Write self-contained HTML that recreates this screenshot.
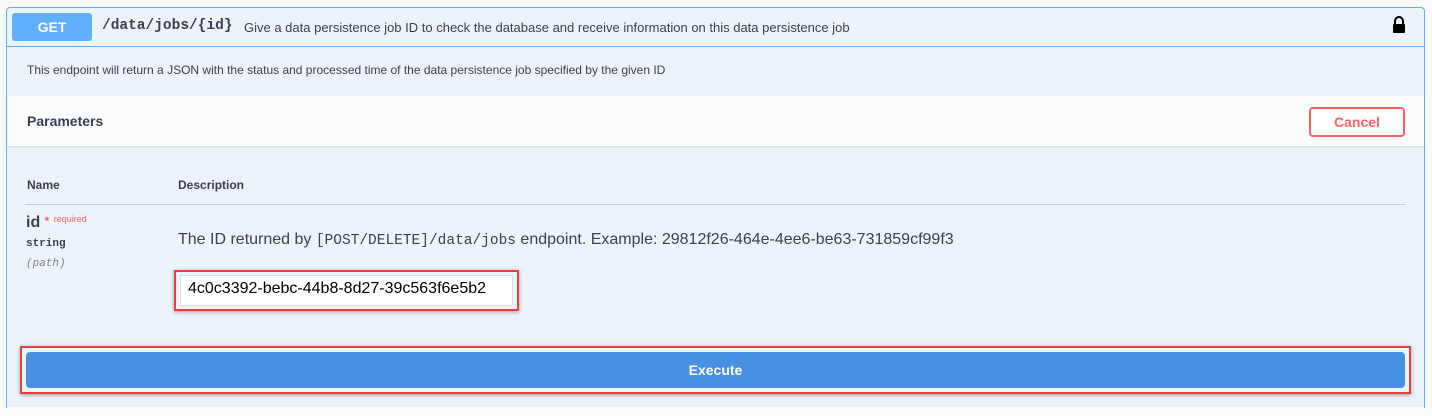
<!DOCTYPE html>
<html style="overflow:hidden;height:416px"><head><style>
body{margin:0;width:1432px;height:416px;background:#fafafa;font-family:"Liberation Sans",sans-serif;position:relative;overflow:hidden;color:#3b4151}
.a{position:absolute}
.box{left:6px;top:7px;width:1417px;height:400px;border:1px solid #61affe;border-bottom:none;border-radius:4px 4px 0 0;background:#ebf3fb}
</style></head><body>
<div class="a box"></div>
<div class="a" style="left:7px;top:46px;width:1417px;height:1px;background:#61affe"></div>
<div class="a" style="left:12px;top:13px;width:80px;height:28px;background:#61affe;border-radius:3px;color:#fff;font-weight:bold;font-size:14px;text-align:center;line-height:28px">GET</div>
<div class="a" style="left:102px;top:18px;font-family:'Liberation Mono',monospace;font-weight:bold;font-size:14.5px;color:#3b4151">/data/jobs/{id}</div>
<div class="a" style="left:244px;top:20px;font-size:13px;color:#3b4151">Give a data persistence job ID to check the database and receive information on this data persistence job</div>
<svg class="a" style="left:1392px;top:16px" width="14" height="18" viewBox="0 0 14 18"><path d="M3 8V5a4 4 0 0 1 8 0v3" fill="none" stroke="#000" stroke-width="2"/><rect x="1" y="8" width="12" height="9" rx="1" fill="#000"/></svg>
<div class="a" style="left:27px;top:63px;font-size:12px">This endpoint will return a JSON with the status and processed time of the data persistence job specified by the given ID</div>
<div class="a" style="left:7px;top:96px;width:1417px;height:50px;background:#fbfcfe;box-shadow:0 1px 2px rgba(0,0,0,.12)"></div>
<div class="a" style="left:27px;top:113px;font-size:14px;font-weight:bold">Parameters</div>
<div class="a" style="left:1309px;top:107px;width:92px;height:26px;border:2px solid #ff6060;border-radius:4px;color:#ff6060;font-weight:bold;font-size:14px;text-align:center;line-height:26px;background:#fff">Cancel</div>
<div class="a" style="left:27px;top:178px;font-size:12px;font-weight:bold">Name</div>
<div class="a" style="left:178px;top:178px;font-size:12px;font-weight:bold">Description</div>
<div class="a" style="left:25px;top:204px;width:1381px;height:1px;background:#c5cfdc"></div>
<div class="a" style="left:26px;top:214px;font-size:16px;font-weight:bold">id <span style="color:#ff6060;font-size:12px;vertical-align:top">*</span> <span style="color:#ff6060;font-size:9px;vertical-align:top;font-weight:normal">required</span></div>
<div class="a" style="left:26px;top:238px;font-family:'Liberation Mono',monospace;font-size:11px;font-weight:bold">string</div>
<div class="a" style="left:26px;top:258px;font-family:'Liberation Mono',monospace;font-size:11px;font-style:italic;color:#808080">(path)</div>
<div class="a" style="left:178px;top:231px;font-size:16px">The ID returned by <span style="font-family:'Liberation Mono',monospace;font-size:14.5px">[POST/DELETE]/data/jobs</span> endpoint. Example: 29812f26-464e-4ee6-be63-731859cf99f3</div>
<div class="a" style="left:174px;top:270px;width:341px;height:37px;border:2px solid #f03c3c;box-shadow:0 1px 4px rgba(0,0,0,.35)"></div>
<div class="a" style="left:180px;top:275px;width:333px;height:31px;background:#fff;border:1px solid #ddd;box-sizing:border-box"></div>
<div class="a" style="left:188px;top:280px;font-size:16px;color:#000">4c0c3392-bebc-44b8-8d27-39c563f6e5b2</div>
<div class="a" style="left:20px;top:346px;width:1387px;height:44px;border:2px solid #f03c3c;box-shadow:0 1px 4px rgba(0,0,0,.35)"></div>
<div class="a" style="left:26px;top:352px;width:1379px;height:36px;background:#4990e2;border-radius:4px;color:#fff;font-weight:bold;font-size:14px;text-align:center;line-height:36px">Execute</div>
<div class="a" style="left:7px;top:407px;width:1417px;height:9px;background:#fbfcfe"></div>
</body></html>
